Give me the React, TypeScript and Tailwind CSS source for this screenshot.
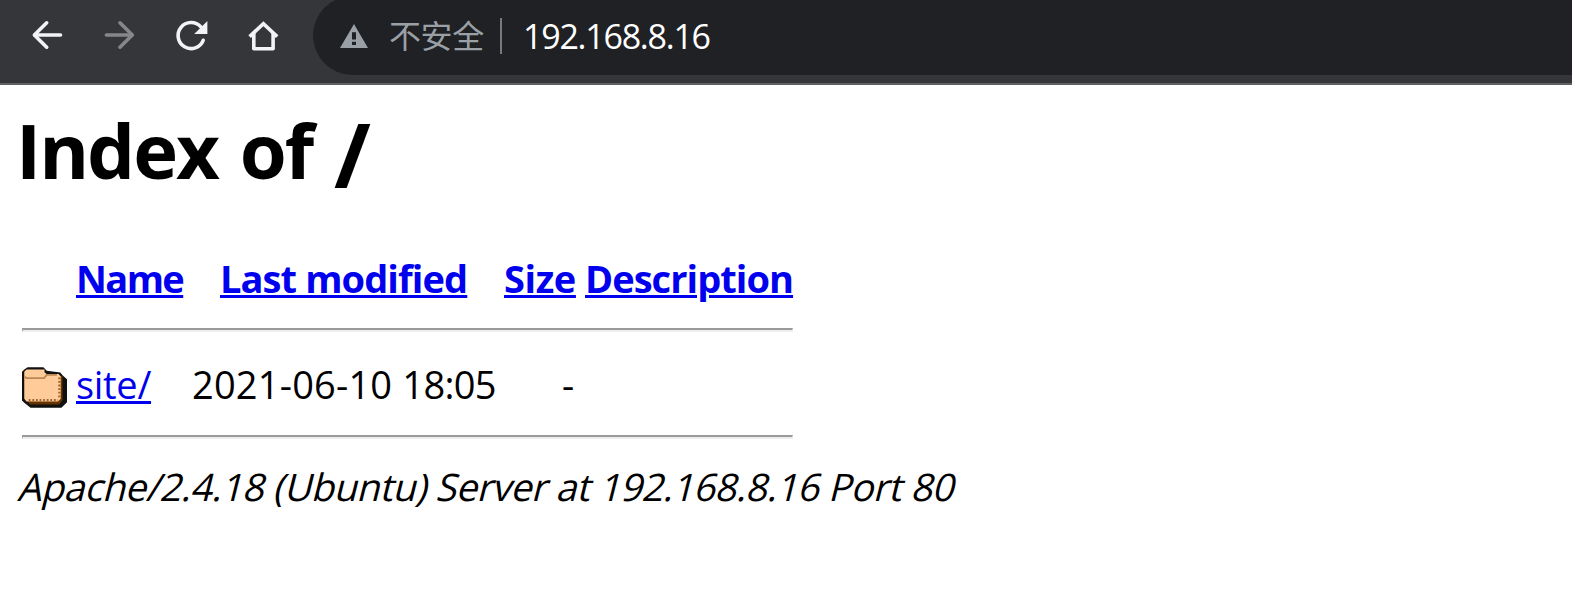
function BackIcon() {
  return (
    <svg className="size-9 text-[#f1f3f4]" viewBox="0 0 36 36" fill="none" stroke="currentColor" strokeWidth="3.6" strokeLinecap="round">
      <path d="M31.5 18H5.6" />
      <path d="M17.7 5.8L5.4 18L17.7 30.2" strokeLinejoin="round" />
    </svg>
  );
}

function ForwardIcon() {
  return (
    <svg className="size-9 text-[#86878a]" viewBox="0 0 36 36" fill="none" stroke="currentColor" strokeWidth="3.6" strokeLinecap="round">
      <path d="M5.4 18H31" />
      <path d="M19 5.8L31.3 18L19 30.2" strokeLinejoin="round" />
    </svg>
  );
}

function ReloadIcon() {
  return (
    <svg className="size-9 text-[#f1f3f4]" viewBox="0 0 36 36" fill="none">
      <path d="M30.2 23.3A13 13 0 1 1 27.8 9.9" stroke="currentColor" strokeWidth="3.6" strokeLinecap="round" />
      <path d="M34.4 4V17H21.2Z" fill="currentColor" />
    </svg>
  );
}

function HomeIcon() {
  return (
    <svg className="size-9 text-[#f1f3f4]" viewBox="0 0 36 36" fill="none" stroke="currentColor" strokeWidth="3.6">
      <path d="M4.6 19.6L18.4 6.6L32.2 19.6" />
      <path d="M8.8 16V31.8H28.1V16" strokeLinejoin="round" />
    </svg>
  );
}

function WarningIcon() {
  return (
    <svg className="h-6 w-7 text-[#9aa0a6]" viewBox="0 0 28 24">
      <path fill="currentColor" fillRule="evenodd" d="M14 0L28 24H0ZM12 8.3V15.5H16V8.3ZM12 17.8V21H16V17.8Z" />
    </svg>
  );
}

function FolderIcon() {
  return (
    <svg className="h-[41px] w-[45px]" viewBox="0 0 20 18">
      <path fill="#111" d="M2.5 0H9.5L11 1.6L17 2.3L18 3.5L20 5.3V15.5L17.5 18H3.8L1 15.8L0 14.8V2L1 1Z" />
      <path fill="#663300" d="M17 4H18V14.5L16.5 16.5H3.5L2.5 15H16V4Z" />
      <path fill="#ffcc99" d="M2 1H10V2.2L11 3H16.2L17.2 4V14L16 15.2H2L1 14V2Z" />
      <path fill="none" stroke="#bb8855" strokeWidth="0.8" d="M1.2 4.2L2 4.8H9.8L11 3.4H15.5" />
      <path fill="none" stroke="#996633" strokeDasharray="0.8 0.8" d="M3 14.6H16M16.6 4.5V14" />
    </svg>
  );
}

function Rule() {
  return (
    <hr className="h-1 w-[771px] border-x border-t-2 border-b-2 border-t-[#9a9a9a] border-r-[#eeeeee] border-b-[#eeeeee] border-l-[#9a9a9a]" />
  );
}

const link = "text-[#0000ee] underline decoration-[3px] underline-offset-[2px]";

export default function App() {
  return (
    <div className="h-[613px] overflow-hidden bg-white font-['Open_Sans','Noto_Sans_CJK_SC',sans-serif] whitespace-nowrap text-black">
      <header className="flex h-[85px] border-b-2 border-[#5f6063] bg-[#35363a]">
        <nav className="flex w-[313px] shrink-0 items-start gap-9 pt-[17px] pl-[29px]">
          <button><BackIcon /></button>
          <button><ForwardIcon /></button>
          <button><ReloadIcon /></button>
          <button><HomeIcon /></button>
        </nav>
        <div className="-mt-1 flex h-[79px] flex-1 items-center rounded-l-full bg-[#202124] pl-[27px]">
          <WarningIcon />
          <span className="ml-[21px] w-[111px] text-[32px] leading-[40px] tracking-[-0.4px] text-[#9aa0a6]">不安全</span>
          <span className="h-9 w-[2px] bg-[#77797c]" />
          <span className="ml-[21px] text-[34px] leading-[46px] font-medium tracking-[-1.25px] text-white">192.168.8.16</span>
        </div>
      </header>
      <main className="pt-[15px] pl-[22px] text-[38px] leading-[50px]">
        <h1 className="-ml-[6px] h-[100px] text-[76px] leading-[100px] font-bold tracking-[-2px] [word-spacing:4px]">
          Index of <span className="relative top-[9px] text-[89px] leading-none">/</span>
        </h1>
        <div className="mt-[53px] flex pl-[54px] font-bold">
          <div className="w-[144px]"><a className={`${link} tracking-[-1.6px]`}>Name</a></div>
          <div className="w-[284px]"><a className={`${link} tracking-[-0.9px]`}>Last modified</a></div>
          <div className="w-[81px]"><a className={`${link} tracking-[-0.4px]`}>Size</a></div>
          <div><a className={`${link} tracking-[-0.95px]`}>Description</a></div>
        </div>
        <div className="pt-[25px]"><Rule /></div>
        <div className="mt-[27px] flex h-[50px]">
          <div className="w-[54px] pt-2"><FolderIcon /></div>
          <div className="w-[116px]"><a className={`${link} tracking-[-0.3px]`}>site/</a></div>
          <div className="w-[370px] tracking-[0.2px]">2021-06-10 <span className="tracking-[-0.7px]">18:05</span></div>
          <div>-</div>
        </div>
        <div className="pt-[26px]"><Rule /></div>
        <address className="mt-[22px] -ml-[5px] w-fit origin-[0_40px] -skew-x-14 not-italic tracking-[-0.46px]">
          Apache/2.4.18 (Ubuntu) Server at 192.168.8.16 Port 80
        </address>
      </main>
    </div>
  );
}
